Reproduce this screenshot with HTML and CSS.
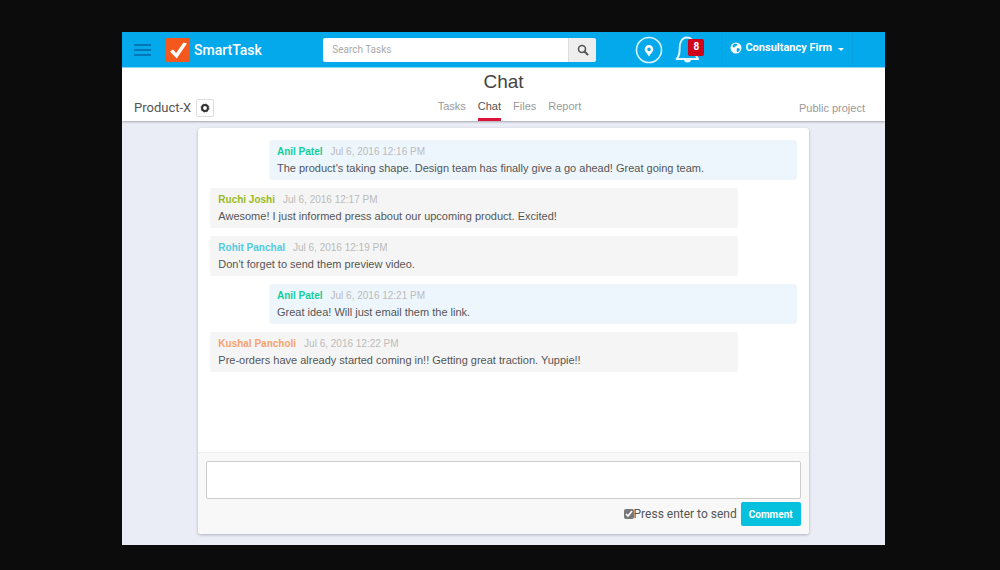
FILE: index.html
```html
<!DOCTYPE html>
<html lang="en">

<head>
    <meta charset="UTF-8">
    <meta name="viewport" content="width=device-width, initial-scale=1.0">
    <title>SmartTask - Chat</title>
    <link rel="stylesheet" href="styles.css">
</head>

<body>
    <div class="app">
        <header class="topbar">
            <button class="menu-btn" type="button" aria-label="Menu">
                <span></span>
                <span></span>
                <span></span>
            </button>
            <a class="brand" href="#">
                <svg class="logo" viewBox="0 0 24 24" aria-hidden="true">
                    <rect width="24" height="24" rx="1" fill="#f4581c"/>
                    <path d="M4 13.500l3-2 3.200 3.500L17.500 4.500l3.500 1L10.700 20.500z" fill="#fff"/>
                </svg>
                SmartTask
            </a>
            <form class="search">
                <input type="text" placeholder="Search Tasks" aria-label="Search Tasks">
                <button type="button" aria-label="Search">
                    <svg viewBox="0 0 12 12" aria-hidden="true">
                        <circle cx="5" cy="5" r="3.500" fill="none" stroke="#555" stroke-width="1.600"/>
                        <path d="M7.500 7.500L10.500 10.500" stroke="#555" stroke-width="2" stroke-linecap="round"/>
                    </svg>
                </button>
            </form>
            <nav class="actions">
                <a class="icon-link" href="#" aria-label="Places">
                    <svg viewBox="0 0 28 28" aria-hidden="true">
                        <circle cx="14" cy="14" r="12.500" fill="none" stroke="#d6f2fd" stroke-width="1.600"/>
                        <path fill-rule="evenodd" d="M14 9a4.300 4.300 0 0 0-4.300 4.300c0 2.700 2.700 4.200 4.300 7.200 1.600-3 4.300-4.500 4.300-7.200A4.300 4.300 0 0 0 14 9zm0 2.600a1.800 1.800 0 1 1 0 3.600 1.800 1.800 0 0 1 0-3.600z" fill="#fff"/>
                    </svg>
                </a>
                <a class="icon-link" href="#" aria-label="Notifications">
                    <svg viewBox="0 0 28 28" aria-hidden="true">
                        <path d="M2.500 23c3-3 3.200-6 3.200-11.500C5.700 5.500 8.500 1.500 13 1.500s8 4 8 10c0 5.500.2 8.500 3.200 11.500z" fill="none" stroke="#e4f6fe" stroke-width="1.800" stroke-linejoin="round"/>
                        <path d="M10 23.500a3.500 3 0 0 0 7 0z" fill="#e4f6fe"/>
                    </svg>
                    <span class="badge">8</span>
                </a>
            </nav>
            <button class="company" type="button">
                <svg viewBox="0 0 12 12" aria-hidden="true">
                    <circle cx="6" cy="6" r="5.500" fill="#fff"/>
                    <path d="M5 1.500l2.500.5-.5 1.500-1.500.5-.5 1.200-1.500.3-1.200-1.500A4.500 4.500 0 0 1 5 1.500zM7 6l2.500.5.5 1.500-2.300 2.300-1.200-1.300z" fill="#03a9ea"/>
                </svg>
                Consultancy Firm
                <span class="caret"></span>
            </button>
        </header>

        <section class="project">
            <h1>Chat</h1>
            <div class="project-row">
                <div class="project-name">
                    Product-X
                    <button type="button" aria-label="Project settings">
                        <svg viewBox="0 0 12 12" aria-hidden="true">
                            <circle cx="6" cy="6" r="3.500" fill="none" stroke="#333" stroke-width="2.400"/>
                            <circle cx="6" cy="6" r="4.800" fill="none" stroke="#333" stroke-width="1" stroke-dasharray="2 1.770"/>
                        </svg>
                    </button>
                </div>
                <nav class="tabs">
                    <a href="#">Tasks</a>
                    <a class="active" href="#">Chat</a>
                    <a href="#">Files</a>
                    <a href="#">Report</a>
                </nav>
                <p class="visibility">Public project</p>
            </div>
        </section>

        <main class="main">
            <section class="chat">
                <div class="messages">
                    <article class="message own">
                        <header><b class="green">Anil Patel</b><time>Jul 6, 2016 12:16 PM</time></header>
                        <p>The product's taking shape. Design team has finally give a go ahead! Great going team.</p>
                    </article>
                    <article class="message">
                        <header><b class="olive">Ruchi Joshi</b><time>Jul 6, 2016 12:17 PM</time></header>
                        <p>Awesome! I just informed press about our upcoming product. Excited!</p>
                    </article>
                    <article class="message">
                        <header><b class="blue">Rohit Panchal</b><time>Jul 6, 2016 12:19 PM</time></header>
                        <p>Don't forget to send them preview video.</p>
                    </article>
                    <article class="message own">
                        <header><b class="green">Anil Patel</b><time>Jul 6, 2016 12:21 PM</time></header>
                        <p>Great idea! Will just email them the link.</p>
                    </article>
                    <article class="message">
                        <header><b class="orange">Kushal Pancholi</b><time>Jul 6, 2016 12:22 PM</time></header>
                        <p>Pre-orders have already started coming in!! Getting great traction. Yuppie!!</p>
                    </article>
                </div>
                <form class="composer">
                    <textarea aria-label="Comment"></textarea>
                    <div class="composer-actions">
                        <label><input type="checkbox" checked>Press enter to send</label>
                        <button type="button">Comment</button>
                    </div>
                </form>
            </section>
        </main>
    </div>
</body>

</html>
```
FILE: styles.css
```css
html {
    box-sizing: border-box;
    font-family: "Liberation Sans", Arial, sans-serif;
    font-size: 11px;
}

*,
*:before,
*:after {
    box-sizing: inherit;
}

body {
    margin: 0;
    min-height: 100vh;
    padding: 32px 115px 25px 122px;
    display: flex;
    background-color: #0c0c0c;
    color: #555;
}

h1,
p {
    margin: 0;
    font-weight: normal;
}

a {
    color: inherit;
    text-decoration: none;
}

button,
input,
textarea {
    font: inherit;
    margin: 0;
}

button {
    padding: 0;
    border: 0;
    cursor: pointer;
}

svg {
    display: block;
}

.app {
    flex: 1;
    min-width: 0;
    display: flex;
    flex-direction: column;
    background-color: #eaecf6;
}

/* top bar */
.topbar {
    height: 36px;
    display: flex;
    align-items: center;
    padding: 0 32px 0 12px;
    background-color: #03a9ea;
    border-bottom: 1px solid #8fdcf8;
    color: #fff;
    font-family: Roboto, sans-serif;
}

.menu-btn {
    width: 17px;
    display: flex;
    flex-direction: column;
    gap: 3px;
    background: none;
}

.menu-btn span {
    height: 2px;
    background-color: #0874b8;
}

.brand {
    flex: 1;
    display: flex;
    align-items: center;
    gap: 4px;
    margin-left: 15px;
    font-size: 14px;
    font-weight: 500;
}

.logo {
    width: 24px;
    height: 24px;
}

.search {
    width: 38%;
    height: 24px;
    display: flex;
    border-radius: 2px;
    overflow: hidden;
}

.search input {
    flex: 1;
    min-width: 0;
    padding: 0 9px;
    border: 0;
    background-color: #fff;
    font-size: 10px;
}

.search input::placeholder {
    color: #aaa;
}

.search button {
    width: 28px;
    display: grid;
    place-items: center;
    background-color: #eee;
    border-left: 1px solid #ddd;
}

.search svg {
    width: 12px;
    height: 12px;
}

.actions {
    display: flex;
    gap: 11px;
    margin-left: 39px;
}

.icon-link {
    position: relative;
}

.icon-link svg {
    width: 28px;
    height: 28px;
}

.badge {
    position: absolute;
    top: 3px;
    right: -2px;
    width: 16px;
    height: 17px;
    border-radius: 2px;
    background-color: #d0021b;
    font-size: 10px;
    font-weight: bold;
    line-height: 16px;
    text-align: center;
}

.company {
    align-self: stretch;
    display: flex;
    align-items: center;
    gap: 3px;
    margin-left: 19px;
    padding: 0 8px 4px;
    border: 1px solid #08a2e0;
    border-width: 0 1px;
    background: none;
    color: #fff;
    font-weight: bold;
}

.company svg {
    width: 12px;
    height: 12px;
}

.caret {
    margin: 3px 0 0 3px;
    border: 3px solid transparent;
    border-top-color: #fff;
    border-bottom: 0;
}

/* project bar */
.project {
    padding: 2px 20px 0 12px;
    background-color: #fff;
    box-shadow: 0 1px 2px rgba(0, 0, 0, .3);
}

.project h1 {
    padding-left: 8px;
    color: #444;
    font-size: 19px;
    line-height: 24px;
    text-align: center;
}

.project-row {
    display: grid;
    grid-template-columns: 1fr auto 1fr;
    align-items: center;
}

.project-name {
    display: flex;
    align-items: center;
    gap: 5px;
    font-family: Roboto, sans-serif;
    font-size: 13px;
}

.project-name button {
    width: 18px;
    height: 18px;
    display: grid;
    place-items: center;
    border: 1px solid #ddd;
    border-radius: 2px;
    background-color: #fff;
}

.project-name svg {
    width: 10px;
    height: 10px;
}

.tabs {
    display: flex;
    gap: 12px;
    padding-left: 20px;
    color: #999;
}

.tabs a {
    border-bottom: 3px solid transparent;
    line-height: 24px;
}

.tabs .active {
    border-bottom-color: #dc143c;
    color: #555;
}

.visibility {
    color: #999;
    text-align: right;
}

/* chat */
.main {
    flex: 1;
    display: flex;
    padding: 7px 10% 11px;
}

.chat {
    flex: 1;
    display: flex;
    flex-direction: column;
    border-radius: 3px;
    background-color: #fff;
    box-shadow: 0 1px 3px rgba(0, 0, 0, .25);
}

.messages {
    flex: 1;
    display: flex;
    flex-direction: column;
    gap: 8px;
    padding: 12px;
}

.message {
    width: 90%;
    padding: 4px 8px;
    border-radius: 3px;
    background-color: #f5f5f5;
    line-height: 16px;
}

.message.own {
    align-self: flex-end;
    background-color: #eef6fd;
}

.message header {
    display: flex;
    gap: 8px;
    font-size: 10px;
}

.message time {
    color: #bbb;
}

.green {
    color: #10cf9c;
}

.olive {
    color: #9aba1c;
}

.blue {
    color: #50cbe0;
}

.orange {
    color: #f9a26c;
}

.composer {
    padding: 8px;
    border-top: 1px solid #eee;
    border-radius: 0 0 3px 3px;
    background-color: #f8f8f8;
    font-family: Roboto, sans-serif;
}

.composer textarea {
    display: block;
    width: 100%;
    height: 38px;
    border: 1px solid #ccc;
    border-radius: 2px;
    background-color: #fff;
    resize: none;
}

.composer-actions {
    display: flex;
    justify-content: flex-end;
    align-items: center;
    gap: 4px;
    margin-top: 3px;
}

.composer label {
    display: flex;
    align-items: center;
    font-size: 12px;
}

.composer input {
    width: 10px;
    height: 10px;
    accent-color: #777;
}

.composer button {
    width: 60px;
    height: 24px;
    border-radius: 2px;
    background-color: #06c1de;
    color: #fff;
    font-size: 10px;
    font-weight: bold;
}
```
